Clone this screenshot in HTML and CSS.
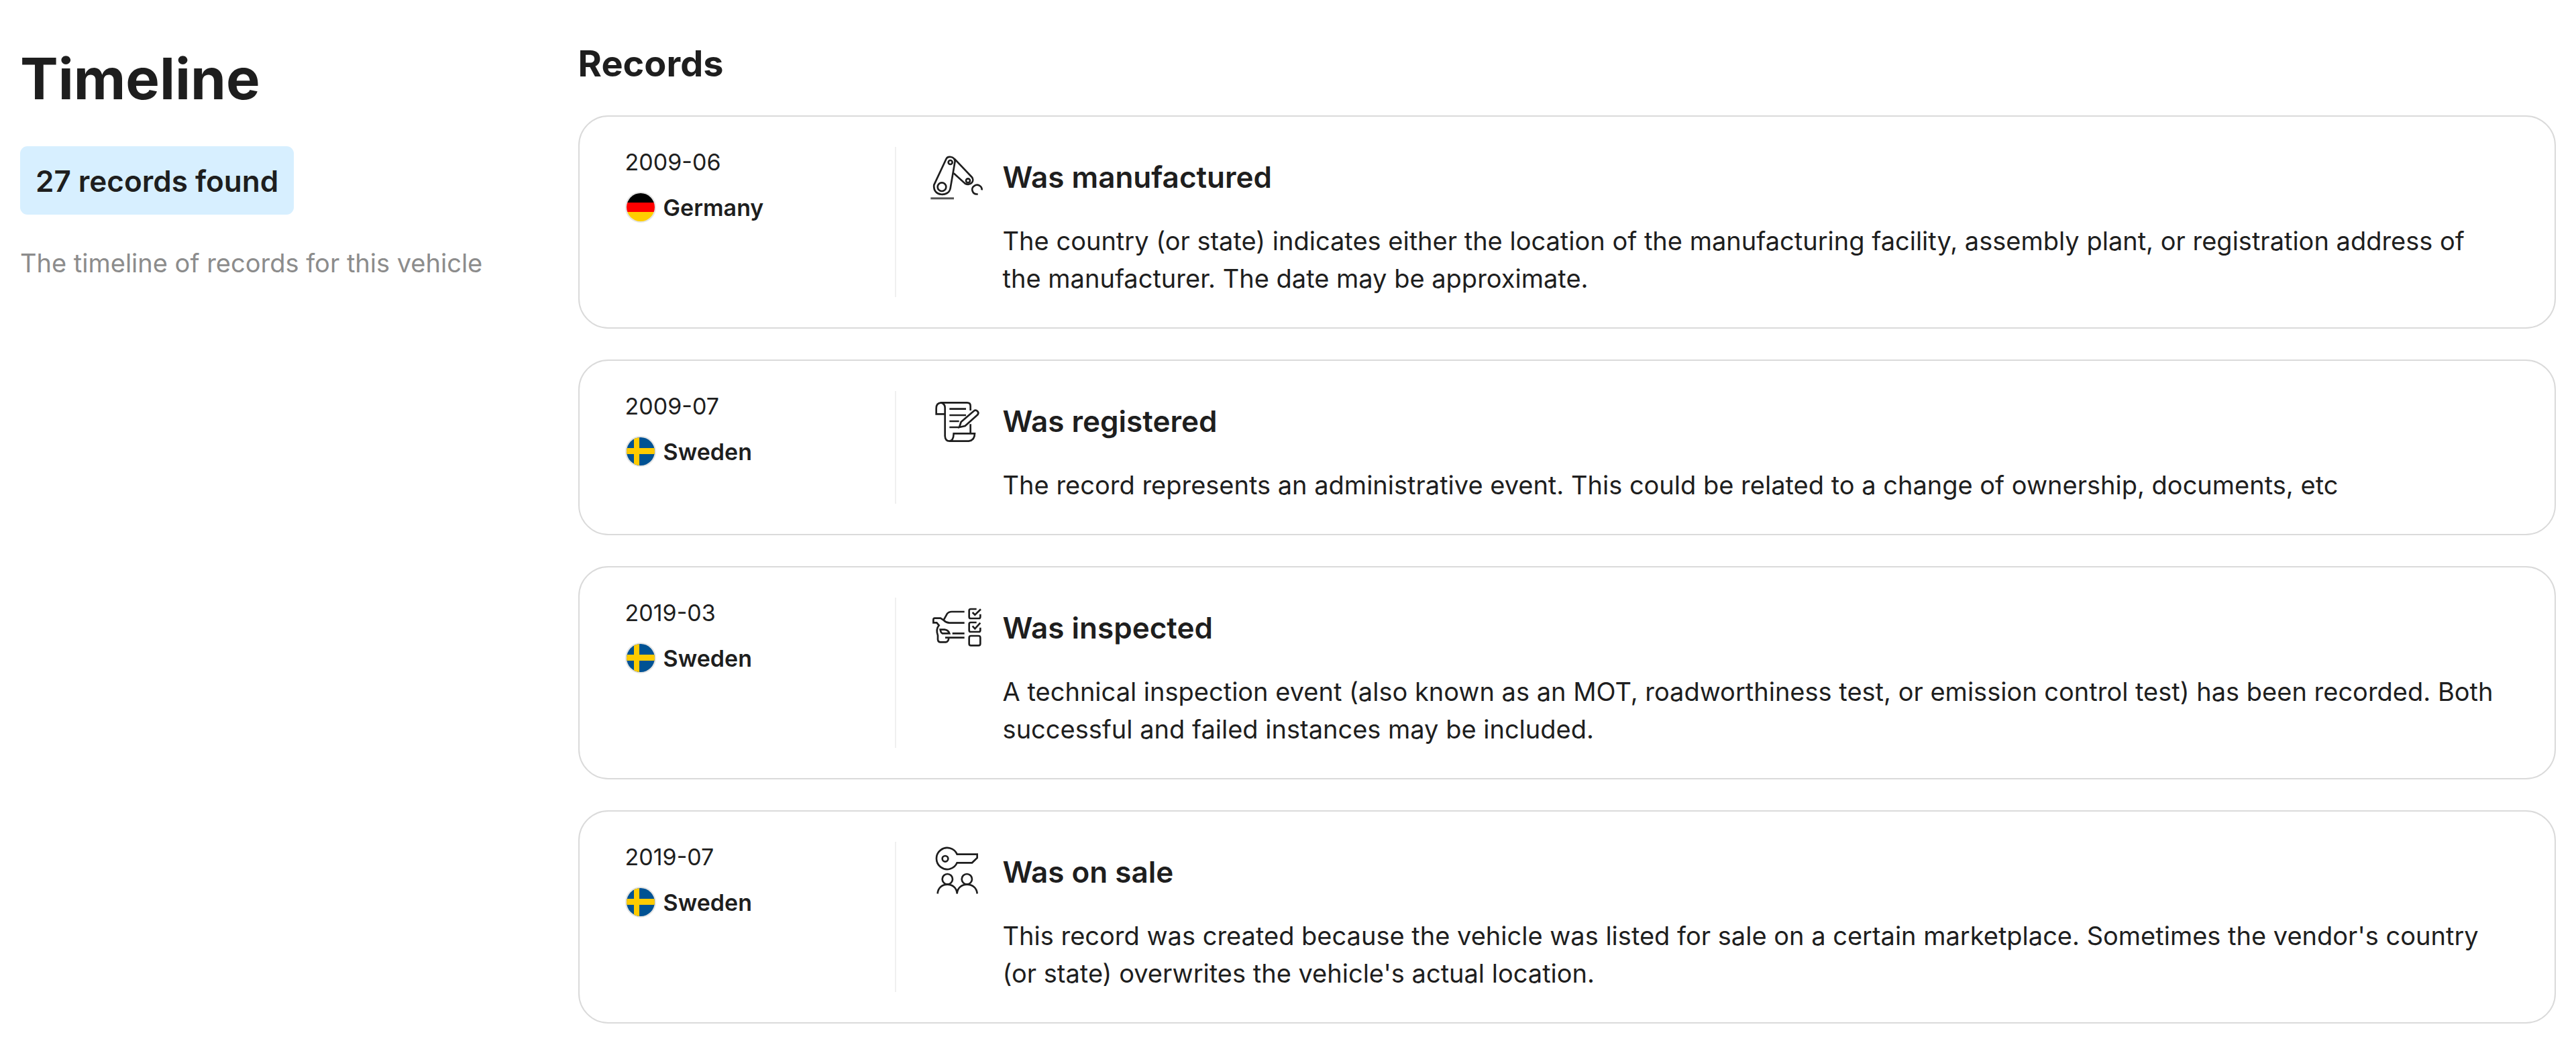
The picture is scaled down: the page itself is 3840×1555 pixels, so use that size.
FILE: index.html
```html
<!DOCTYPE html>
<html lang="en">
<head>
<meta charset="utf-8">
<title>Timeline</title>
<meta name="viewport" content="width=device-width, initial-scale=1">
<link rel="stylesheet" href="styles.css">
</head>
<body>
<main class="page">
  <aside class="summary">
    <h1 class="summary-title">Timeline</h1>
    <p class="badge">27 records found</p>
    <p class="summary-note">The timeline of records for this vehicle</p>
  </aside>

  <section class="records">
    <h2 class="records-title">Records</h2>
    <ol class="record-list">
      <li class="card">
        <div class="meta">
          <time class="date" datetime="2009-06">2009-06</time>
          <div class="country">
            <svg class="flag" viewBox="0 0 46 46" aria-hidden="true">
              <clipPath id="disc"><circle cx="23" cy="23" r="21"/></clipPath>
              <circle cx="23" cy="23" r="22" fill="#fff" stroke="#e4e4e4" stroke-width="2"/>
              <g clip-path="url(#disc)">
                <path fill="#000" d="M0 0h46v16H0z"/>
                <path fill="#f00" d="M0 16h46v14H0z"/>
                <path fill="#ffce00" d="M0 30h46v16H0z"/>
              </g>
            </svg>
            <span>Germany</span>
          </div>
        </div>
        <div class="event">
          <svg class="icon" viewBox="78 45 240 240" aria-hidden="true">
            <path d="M82 257H186" stroke-width="9" stroke="#555"/>
            <path d="M151 82C156 68 187 66 191 91L170 212C164 252 90 250 97 197Z"/>
            <circle cx="132" cy="206" r="19"/>
            <circle cx="170" cy="96" r="9"/>
            <path d="M188 80L266 162C280 178 262 203 236 191L185 145"/>
            <circle cx="249" cy="178" r="9"/>
            <path d="M293 238C268 242 260 212 276 202C292 190 312 202 311 220"/>
          </svg>
          <div class="event-text">
            <h3 class="event-title">Was manufactured</h3>
            <p class="event-note">The country (or state) indicates either the location of the manufacturing facility, assembly plant, or registration address of the manufacturer. The date may be approximate.</p>
          </div>
        </div>
      </li>

      <li class="card">
        <div class="meta">
          <time class="date" datetime="2009-07">2009-07</time>
          <div class="country">
            <svg class="flag" viewBox="0 0 46 46" aria-hidden="true">
              <circle cx="23" cy="23" r="22" fill="#fff" stroke="#e4e4e4" stroke-width="2"/>
              <g clip-path="url(#disc)">
                <path fill="#005293" d="M0 0h46v46H0z"/>
                <path fill="#fecb00" d="M13 0h8v46h-8zM0 18h46v9H0z"/>
              </g>
            </svg>
            <span>Sweden</span>
          </div>
        </div>
        <div class="event">
          <svg class="icon" viewBox="78 57 240 240" aria-hidden="true">
            <path d="M260 126V106Q260 91 245 91H128Q107 93 107 116V142H145"/>
            <path d="M128 91Q146 95 146 114V240Q147 263 167 263H252Q279 260 279 229H185Q184 262 166 263"/>
            <path d="M166 119H240M166 147H240M166 174H209M166 201H210M260 187V229"/>
            <path d="M210 201L218 177L275 128C286 119 301 134 292 145L236 195Z"/>
          </svg>
          <div class="event-text">
            <h3 class="event-title">Was registered</h3>
            <p class="event-note">The record represents an administrative event. This could be related to a change of ownership, documents, etc</p>
          </div>
        </div>
      </li>

      <li class="card">
        <div class="meta">
          <time class="date" datetime="2019-03">2019-03</time>
          <div class="country">
            <svg class="flag" viewBox="0 0 46 46" aria-hidden="true">
              <circle cx="23" cy="23" r="22" fill="#fff" stroke="#e4e4e4" stroke-width="2"/>
              <g clip-path="url(#disc)">
                <path fill="#005293" d="M0 0h46v46H0z"/>
                <path fill="#fecb00" d="M13 0h8v46h-8zM0 18h46v9H0z"/>
              </g>
            </svg>
            <span>Sweden</span>
          </div>
        </div>
        <div class="event">
          <svg class="icon" viewBox="78 51 240 240" aria-hidden="true">
            <path d="M233 96H176Q162 96 155 106L140 133M233 146H166Q153 146 140 134L126 125H100Q94 125 94 132V145H109L119 157Q104 174 114 202V220Q115 232 126 232H150Q162 231 163 212"/>
            <path d="M233 212H147M233 193H179M125 176H144Q161 178 166 193H134Q127 190 125 176Z"/>
            <path d="M287 84H261Q254 84 254 91V119Q254 126 261 126H297Q304 126 304 119V107M269 99L280 110L306 85"/>
            <path d="M287 144H261Q254 144 254 151V179Q254 186 261 186H297Q304 186 304 179V167M269 160L280 172L304 146"/>
            <rect x="254" y="204" width="50" height="43" rx="8"/>
          </svg>
          <div class="event-text">
            <h3 class="event-title">Was inspected</h3>
            <p class="event-note">A technical inspection event (also known as an MOT, roadworthiness test, or emission control test) has been recorded. Both successful and failed instances may be included.</p>
          </div>
        </div>
      </li>

      <li class="card">
        <div class="meta">
          <time class="date" datetime="2019-07">2019-07</time>
          <div class="country">
            <svg class="flag" viewBox="0 0 46 46" aria-hidden="true">
              <circle cx="23" cy="23" r="22" fill="#fff" stroke="#e4e4e4" stroke-width="2"/>
              <g clip-path="url(#disc)">
                <path fill="#005293" d="M0 0h46v46H0z"/>
                <path fill="#fecb00" d="M13 0h8v46h-8zM0 18h46v9H0z"/>
              </g>
            </svg>
            <span>Sweden</span>
          </div>
        </div>
        <div class="event">
          <svg class="icon" viewBox="78 63 240 240" aria-hidden="true">
            <path d="M200 101A48 48 0 1 0 200 139H267L290 117V101Z"/>
            <circle cx="147" cy="121" r="13"/>
            <circle cx="157" cy="212" r="23"/>
            <circle cx="244" cy="212" r="23"/>
            <path d="M113 277C116 222 197 222 200 277C203 222 286 222 290 277"/>
          </svg>
          <div class="event-text">
            <h3 class="event-title">Was on sale</h3>
            <p class="event-note">This record was created because the vehicle was listed for sale on a certain marketplace. Sometimes the vendor's country (or state) overwrites the vehicle's actual location.</p>
          </div>
        </div>
      </li>
    </ol>
  </section>
</main>
</body>
</html>
```
FILE: styles.css
```css
* {
  box-sizing: border-box;
  margin: 0;
  padding: 0;
}

body {
  background: #fff;
  color: #1e1e1e;
  font-family: Inter, "Liberation Sans", sans-serif;
}

.page {
  display: grid;
  grid-template-columns: 22% 1fr;
  padding: 56px 30px 28px;
}

.summary {
  display: flex;
  flex-direction: column;
  align-items: flex-start;
  gap: 44px;
  padding-top: 6px;
}

.summary-title {
  font-size: 85px;
  line-height: 112px;
  font-weight: 700;
}

.badge {
  padding: 19px 23px 17px;
  border-radius: 11px;
  background: #d7efff;
  font-size: 44px;
  line-height: 66px;
  font-weight: 600;
}

.summary-note {
  color: #8c8c8c;
  font-size: 38px;
  line-height: 56px;
}

.records-title {
  margin-bottom: 38px;
  font-size: 54px;
  line-height: 78px;
  font-weight: 700;
}

.record-list {
  display: flex;
  flex-direction: column;
  gap: 46px;
  list-style: none;
}

.card {
  display: grid;
  grid-template-columns: 404px 1fr;
  padding: 45px 68px;
  border: 2px solid #dadada;
  border-radius: 45px;
}

.meta {
  display: flex;
  flex-direction: column;
  gap: 22px;
  border-right: 2px solid #f0f0f0;
}

.date,
.country {
  font-size: 34px;
  line-height: 45px;
}

.country {
  display: flex;
  align-items: center;
  gap: 11px;
  font-weight: 600;
}

.flag {
  width: 46px;
  height: 46px;
}

.event {
  display: flex;
  align-items: flex-start;
  gap: 29px;
  padding-left: 50px;
}

.icon {
  flex: none;
  width: 80px;
  height: 80px;
  margin-top: 6px;
  fill: none;
  stroke: #1e1e1e;
  stroke-width: 8;
}

.event-text {
  display: flex;
  flex-direction: column;
  gap: 34px;
  padding-top: 12px;
}

.event-title {
  font-size: 44px;
  line-height: 66px;
  font-weight: 600;
}

.event-note {
  font-size: 38px;
  line-height: 56px;
}
```
